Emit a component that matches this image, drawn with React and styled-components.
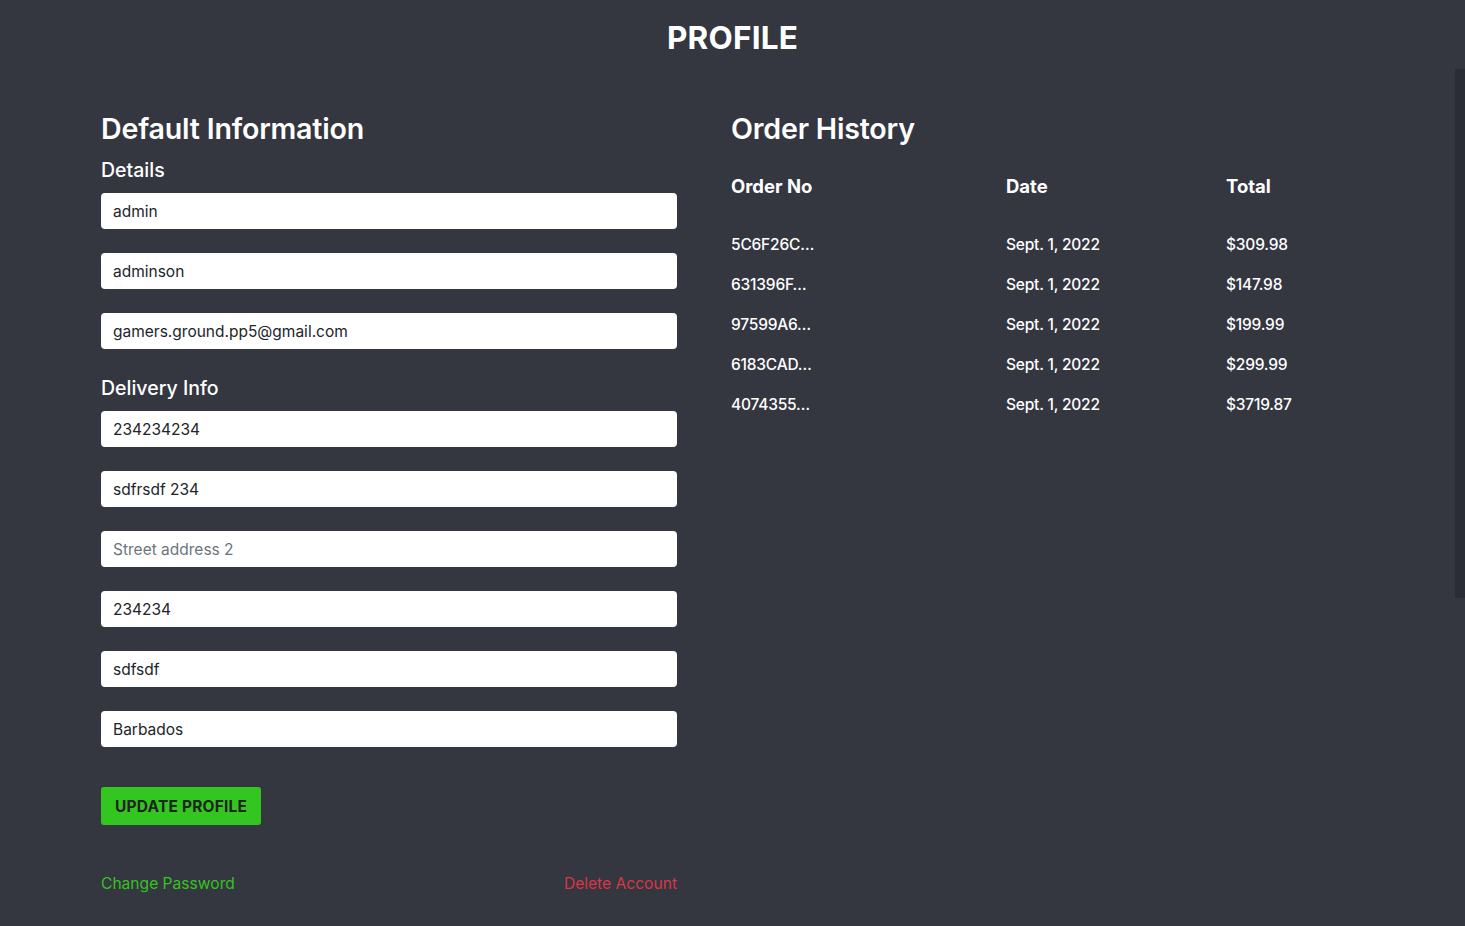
import styled, { createGlobalStyle } from "styled-components";

const orders = [
    { no: "5C6F26C…", date: "Sept. 1, 2022", total: "$309.98" },
    { no: "631396F…", date: "Sept. 1, 2022", total: "$147.98" },
    { no: "97599A6…", date: "Sept. 1, 2022", total: "$199.99" },
    { no: "6183CAD…", date: "Sept. 1, 2022", total: "$299.99" },
    { no: "4074355…", date: "Sept. 1, 2022", total: "$3719.87" },
];

const details = ["admin", "adminson", "gamers.ground.pp5@gmail.com"];
const delivery = [
    { value: "234234234" },
    { value: "sdfrsdf 234" },
    { value: "", placeholder: "Street address 2" },
    { value: "234234" },
    { value: "sdfsdf" },
    { value: "Barbados" },
];

function App() {
    return (
        <Page>
            <GlobalStyle />
            <Title>PROFILE</Title>
            <Columns>
                <Left>
                    <Heading>Default Information</Heading>
                    <SubHeading className="details">Details</SubHeading>
                    <Fields>
                        {details.map(v => <Input key={v} defaultValue={v} />)}
                    </Fields>
                    <SubHeading className="delivery">Delivery Info</SubHeading>
                    <Fields>
                        {delivery.map((f, i) => (
                            <Input key={i} defaultValue={f.value} placeholder={f.placeholder} />
                        ))}
                    </Fields>
                    <Button>UPDATE PROFILE</Button>
                    <Links>
                        <Link color="#34c31f">Change Password</Link>
                        <Link color="#dc3545">Delete Account</Link>
                    </Links>
                </Left>
                <Right>
                    <Heading>Order History</Heading>
                    <Table>
                        <Th>Order No</Th>
                        <Th>Date</Th>
                        <Th>Total</Th>
                        {orders.map(o => (
                            <Row key={o.no}>
                                <Td>{o.no}</Td>
                                <Td>{o.date}</Td>
                                <Td>{o.total}</Td>
                            </Row>
                        ))}
                    </Table>
                </Right>
            </Columns>
            <Scroll />
        </Page>
    );
}

export default App;

const GlobalStyle = createGlobalStyle`
    * { box-sizing: border-box; }
    body {
        margin: 0;
        background: #343640;
        font-family: "Inter", "Open Sans", sans-serif;
        color: #ffffff;
    }
`

const Page = styled.div`
    position: relative;
    min-height: 926px;
    padding: 18px 0 0;
    overflow: hidden;
`

const Title = styled.h1`
    margin: 0;
    text-align: center;
    font-size: 31.5px;
    font-weight: 700;
    line-height: 40px;
    letter-spacing: 0.2px;
`

const Columns = styled.div`
    display: grid;
    grid-template-columns: 576px 1fr;
    column-gap: 54px;
    padding: 52px 101px 0;
`

const Left = styled.div`
    display: flex;
    flex-direction: column;
`

const Right = styled.div`
    display: flex;
    flex-direction: column;
`

const Heading = styled.h2`
    margin: 0;
    font-size: 28.6px;
    font-weight: 600;
    line-height: 38px;
    letter-spacing: -0.2px;
`

const SubHeading = styled.h3`
    margin: 0 0 9px;
    font-size: 19.5px;
    font-weight: 500;
    line-height: 28px;

    &.details {
        margin-top: 8px;
    }

    &.delivery {
        margin-top: 25px;
    }
`

const Fields = styled.div`
    display: flex;
    flex-direction: column;
    gap: 24px;
`

const Input = styled.input`
    height: 36px;
    width: 100%;
    border: none;
    border-radius: 4px;
    padding: 0 12px;
    background: #ffffff;
    color: #212529;
    font-family: "Inter", sans-serif;
    font-size: 15.5px;
    outline: none;

    &::placeholder {
        color: #6c757d;
    }
`

const Button = styled.button`
    align-self: flex-start;
    margin-top: 40px;
    height: 38px;
    padding: 0 14px;
    border: none;
    border-radius: 3px;
    background: #34c620;
    color: #1f2420;
    font-family: "Inter", sans-serif;
    font-size: 15.5px;
    font-weight: 700;
    letter-spacing: 0.2px;
`

const Links = styled.div`
    display: flex;
    justify-content: space-between;
    margin-top: 50px;
`

const Link = styled.a`
    color: ${props => props.color};
    font-size: 15.6px;
    line-height: 18px;
    cursor: pointer;
`

const Table = styled.div`
    display: grid;
    grid-template-columns: 275px 220px 1fr;
    margin-top: 24px;
`

const Th = styled.div`
    font-size: 18.5px;
    font-weight: 700;
    line-height: 28px;
    padding-bottom: 33px;
`

const Row = styled.div`
    display: contents;
`

const Td = styled.div`
    font-size: 15.5px;
    font-weight: 500;
    line-height: 24px;
    padding-bottom: 16px;
    letter-spacing: -0.2px;
`

const Scroll = styled.div`
    position: absolute;
    top: 69px;
    right: 0;
    width: 10px;
    height: 529px;
    background: #2a2d36;
`
